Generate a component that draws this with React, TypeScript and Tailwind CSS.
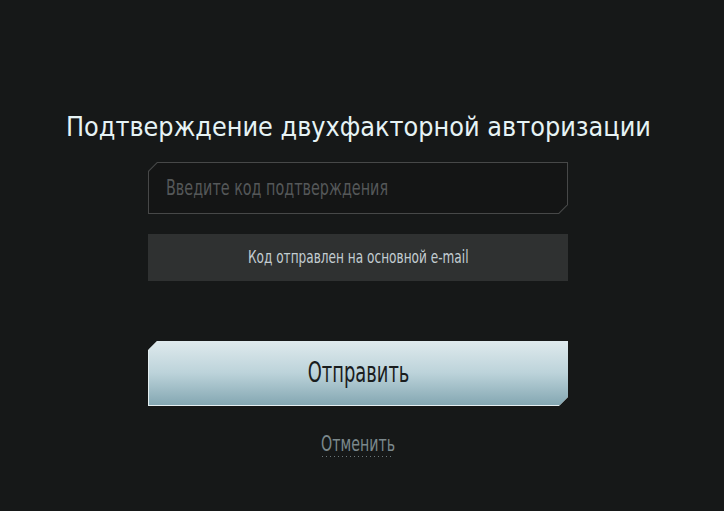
import React from "react";

export default function App() {
  const font = { fontFamily: '"DejaVu Sans Condensed", "DejaVu Sans", sans-serif' };
  return (
    <div className="w-[724px] h-[511px] bg-[#161818] flex flex-col items-center pr-[8px]" style={font}>
      <h1 className="mt-[109px] text-[27px] leading-[36px] text-[#e6f3f5] font-normal">
        <span className="inline-block scale-x-[0.99]">Подтверждение двухфакторной авторизации</span>
      </h1>
      <div className="mt-[17px] w-[420px] h-[52px] bg-[#474848] p-px [clip-path:polygon(9px_0,100%_0,100%_calc(100%-9px),calc(100%-9px)_100%,0_100%,0_9px)]">
        <div className="w-full h-full bg-[#141515] flex items-center pl-[17px] pt-[2px] [clip-path:polygon(8.5px_0,100%_0,100%_calc(100%-8.5px),calc(100%-8.5px)_100%,0_100%,0_8.5px)]">
          <span className="inline-block origin-left scale-x-[0.76] text-[21px] text-[#555859] whitespace-nowrap">Введите код подтверждения</span>
        </div>
      </div>
      <div className="mt-[20px] w-[420px] h-[47px] bg-[#2f3131] flex items-center justify-center">
        <span className="inline-block scale-x-[0.77] text-[17.5px] text-[#c3cdd1] whitespace-nowrap">Код отправлен на основной e-mail</span>
      </div>
      <div className="mt-[60px] w-[420px] h-[65px] bg-[#e4eef0] pl-px pb-px [clip-path:polygon(9px_0,100%_0,100%_calc(100%-9px),calc(100%-9px)_100%,0_100%,0_9px)]">
        <div className="w-full h-full bg-gradient-to-b from-[#dfeaed] via-[#bcd3da] to-[#84a7b2] flex items-center justify-center [clip-path:polygon(8px_0,100%_0,100%_calc(100%-8px),calc(100%-8px)_100%,0_100%,0_8px)]">
          <span className="inline-block scale-x-[0.71] text-[28px] text-[#1a1d1e] whitespace-nowrap">Отправить</span>
        </div>
      </div>
      <div className="mt-[26px] flex flex-col items-center">
        <span className="inline-block scale-x-[0.77] text-[20.5px] leading-[24px] text-[#7b888c] whitespace-nowrap">Отменить</span>
        <div className="mt-0 w-[72px] h-px bg-[repeating-linear-gradient(90deg,#6b7679_0_1px,transparent_1px_4px)]" />
      </div>
    </div>
  );
}
